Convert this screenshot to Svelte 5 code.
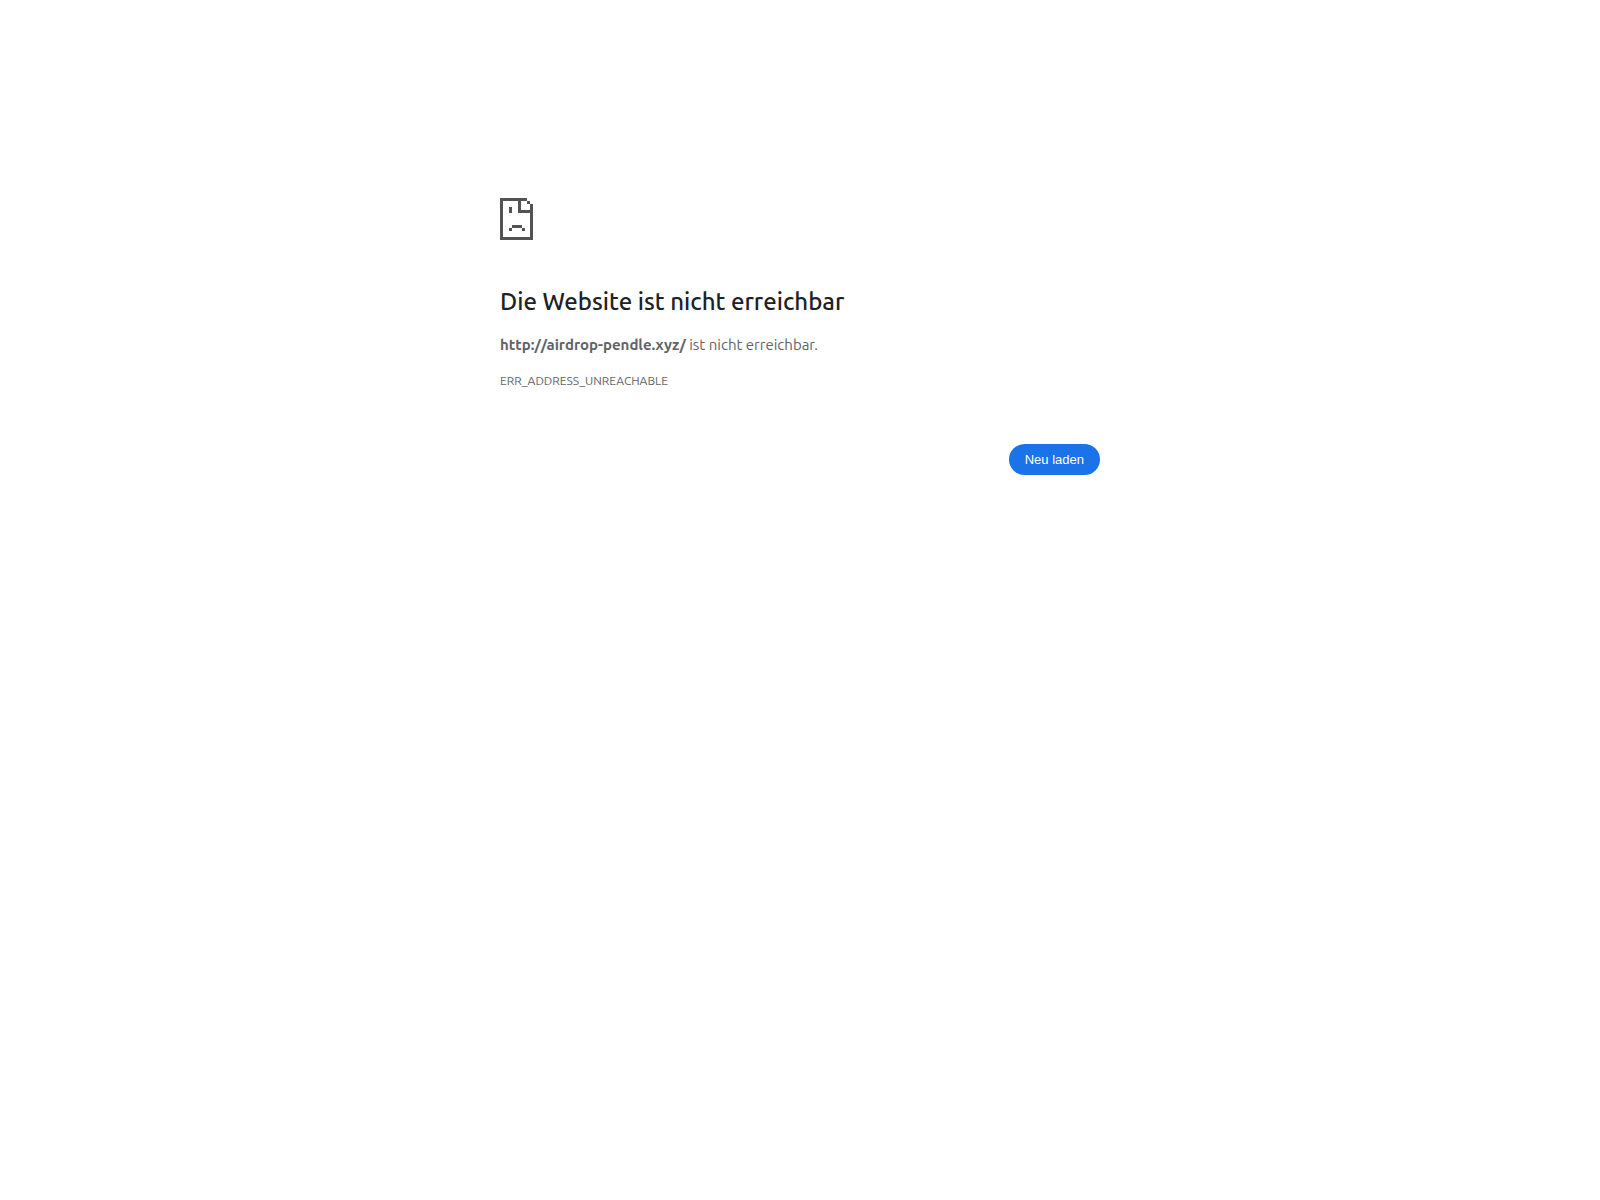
<script lang="ts">
    const url = "http://airdrop-pendle.xyz/";
    const errorCode = "ERR_ADDRESS_UNREACHABLE";

    function reload() {
        window.location.reload();
    }
</script>

<svelte:head>
    <title>{url}</title>
</svelte:head>

<main class="error-page">
    <svg
        class="icon"
        viewBox="0 0 33 42"
        shape-rendering="crispEdges"
        aria-hidden="true"
    >
        <path
            d="M0 0h27v3h3v3h3v36H0zM3 3v36h27V15H18V3zM21 3v9h9V6h-3V3z"
            fill="#535353"
            fill-rule="evenodd"
        />
        <path d="M9 9h3v6H9zM12 27h10v3H12zM9 30h3v3H9zM22 30h3v3h-3z" fill="#535353" />
    </svg>

    <h1>Die Website ist nicht erreichbar</h1>
    <p class="summary"><strong>{url}</strong> ist nicht erreichbar.</p>
    <p class="error-code">{errorCode}</p>

    <div class="actions">
        <button type="button" on:click={reload}>Neu laden</button>
    </div>
</main>

<style>
    :global(body) {
        margin: 0;
        background: #fff;
    }

    .error-page {
        box-sizing: border-box;
        max-width: 600px;
        margin: 0 auto;
        padding-top: 198px;
        color: #5f6368;
        font-family: Ubuntu, "Noto Sans", sans-serif;
        font-size: 15px;
        line-height: 24px;
    }

    .icon {
        display: block;
        width: 33px;
        height: 42px;
    }

    h1 {
        margin: 47px 0 16px;
        color: #202124;
        font-size: 24px;
        font-weight: 500;
        line-height: 30px;
    }

    p {
        margin: 0;
    }

    .summary strong {
        font-weight: 700;
    }

    .error-code {
        margin-top: 12px;
        font-size: 12px;
    }

    .actions {
        display: flex;
        justify-content: flex-end;
        margin-top: 51px;
    }

    button {
        padding: 8px 16px;
        border: 0;
        border-radius: 20px;
        background: #1a73e8;
        color: #fff;
        font-family: Arial, "Liberation Sans", sans-serif;
        font-size: 13px;
        font-weight: 500;
        line-height: 15px;
        cursor: pointer;
    }

    button:hover {
        background: #1b66c9;
    }
</style>
